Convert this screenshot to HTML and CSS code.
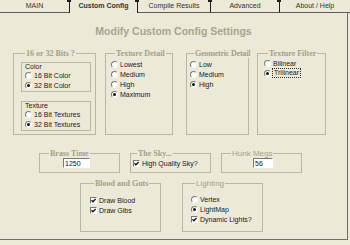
FILE: index.html
```html
<!DOCTYPE html>
<html lang="en">
<head>
  <meta charset="UTF-8">
  <title>Custom Config</title>
  <link rel="stylesheet" href="styles.css">
</head>
<body>
  <!-- tab strip -->
  <div class="tabs">
    <div class="tab main">MAIN</div>
    <div class="tab active">Custom Config</div>
    <div class="tab compile">Compile Results</div>
    <div class="tab advanced">Advanced</div>
    <div class="tab last">About / Help</div>
  </div>

  <div class="panel">
    <h1 class="title">Modify Custom Config Settings</h1>

    <div class="row row-top">
      <fieldset class="group bits">
        <legend>16 or 32 Bits ?</legend>
        <div class="subgroup">
          <div class="caption">Color</div>
          <label class="opt"><span class="radio"></span>16 Bit Color</label>
          <label class="opt"><span class="radio on"></span>32 Bit Color</label>
        </div>
        <div class="subgroup">
          <div class="caption">Texture</div>
          <label class="opt"><span class="radio"></span>16 Bit Textures</label>
          <label class="opt"><span class="radio on"></span>32 Bit Textures</label>
        </div>
      </fieldset>

      <fieldset class="group tex">
        <legend>Texture Detail</legend>
        <label class="opt"><span class="radio"></span>Lowest</label>
        <label class="opt"><span class="radio"></span>Medium</label>
        <label class="opt"><span class="radio"></span>High</label>
        <label class="opt"><span class="radio on"></span>Maximum</label>
      </fieldset>

      <fieldset class="group geo">
        <legend>Geometric Detail</legend>
        <label class="opt"><span class="radio"></span>Low</label>
        <label class="opt"><span class="radio"></span>Medium</label>
        <label class="opt"><span class="radio on"></span>High</label>
      </fieldset>

      <fieldset class="group filter">
        <legend>Texture Filter</legend>
        <label class="opt"><span class="radio"></span>Bilinear</label>
        <label class="opt"><span class="radio on"></span><span class="focus">Trilinear</span></label>
      </fieldset>
    </div>

    <div class="row row-mid">
      <fieldset class="group brass">
        <legend>Brass Time</legend>
        <input class="field" type="text" value="1250">
      </fieldset>

      <fieldset class="group sky">
        <legend>The Sky...</legend>
        <label class="opt"><span class="check"><svg viewBox="0 0 5 5"><path d="M0.4 2.3 L1.9 3.8 L4.6 0.9"/></svg></span>High Quality Sky?</label>
      </fieldset>

      <fieldset class="group hunk">
        <legend class="sans">Hunk Megs</legend>
        <input class="field small" type="text" value="56">
      </fieldset>
    </div>

    <div class="row row-bottom">
      <fieldset class="group blood">
        <legend>Blood and Guts</legend>
        <label class="opt"><span class="check"><svg viewBox="0 0 5 5"><path d="M0.4 2.3 L1.9 3.8 L4.6 0.9"/></svg></span>Draw Blood</label>
        <label class="opt"><span class="check"><svg viewBox="0 0 5 5"><path d="M0.4 2.3 L1.9 3.8 L4.6 0.9"/></svg></span>Draw Gibs</label>
      </fieldset>

      <fieldset class="group lighting">
        <legend class="sans">Lighting</legend>
        <label class="opt"><span class="radio"></span>Vertex</label>
        <label class="opt"><span class="radio on"></span>LightMap</label>
        <label class="opt"><span class="check"><svg viewBox="0 0 5 5"><path d="M0.4 2.3 L1.9 3.8 L4.6 0.9"/></svg></span>Dynamic Lights?</label>
      </fieldset>
    </div>
  </div>
</body>
</html>
```

FILE: styles.css
```css
* {
  box-sizing: border-box;
}

body {
  margin: 0;
  width: 350px;
  height: 245px;
  overflow: hidden;
  background: #ece9d8;
  font-family: "Liberation Sans", Arial, sans-serif;
  font-size: 7px;
  color: #1a1a1a;
}

/* tabs */
.tabs {
  display: flex;
  height: 13px;
}
.tab {
  position: relative;
  width: 70px;
  height: 13px;
  line-height: 11px;
  text-align: center;
  color: #333;
  border-right: 1px solid #1e1e1e;
  border-bottom: 1px solid #5d5c54;
}
.tab::after {
  content: "";
  position: absolute;
  top: 0;
  right: -2px;
  width: 4px;
  height: 2px;
  background: #1e1e1e;
}
.tab.active {
  width: 68px;
  line-height: 12px;
  font-weight: bold;
  color: #1f3a3a;
  border-bottom: none;
}
.tab.compile {
  width: 73px;
}
.tab.advanced {
  width: 69px;
}
.tab.last {
  border-right: none;
}
.tab.last::after {
  display: none;
}

/* panel */
.panel {
  width: 348px;
  height: 227px;
  padding-top: 12px;
  border-right: 1px solid #716f64;
  border-bottom: 1px solid #716f64;
}
.title {
  margin: 0;
  font-size: 10.5px;
  line-height: 12px;
  text-align: center;
  color: #a7a58f;
}

.row {
  display: flex;
  align-items: flex-start;
}
.row-top {
  margin-top: 12px;
  padding-left: 13px;
}
.row-mid {
  margin-top: 14px;
  padding-left: 39px;
  gap: 10px;
}
.row-bottom {
  margin-top: 6px;
  padding-left: 80px;
  gap: 21px;
}

/* group boxes */
.group {
  margin: 0;
  min-width: 0;
  padding: 1px 0 0 5px;
  border: 1px solid #bab7a7;
}
.group legend {
  margin-left: 4px;
  padding: 0 1px;
  white-space: nowrap;
  font: bold 8px/9px "Liberation Serif", "Times New Roman", serif;
  color: #a3a187;
}
.group legend.sans {
  font: 8px/9px "Liberation Sans", Arial, sans-serif;
}

.row-top .group {
  height: 86px;
}
.bits {
  width: 83px;
  padding-left: 7px;
}
.tex {
  width: 68px;
  margin-left: 9px;
}
.geo {
  width: 63px;
  margin-left: 13px;
  padding-left: 3px;
}
.geo legend {
  letter-spacing: -0.2px;
}
.filter {
  width: 69px;
  margin-left: 8px;
  padding-top: 0;
  padding-left: 6px;
}

.row-mid .group {
  width: 81px;
  height: 24px;
  padding-top: 0;
}
.sky {
  padding-left: 2px;
}
.row-bottom .group {
  width: 81px;
  height: 53px;
}
.blood {
  padding: 7px 0 0 9px;
}
.lighting {
  width: 80px;
  padding: 6px 0 0 8px;
}

.subgroup {
  width: 70px;
  margin-top: 3px;
  padding: 0 0 1px 3px;
  border: 1px solid #bab7a7;
}
.subgroup + .subgroup {
  margin-top: 9px;
}
.caption {
  line-height: 7px;
}

/* options */
.opt {
  display: flex;
  align-items: center;
  gap: 2px;
  height: 10px;
  white-space: nowrap;
}
.radio {
  flex: none;
  display: flex;
  align-items: center;
  justify-content: center;
  width: 7px;
  height: 7px;
  border-radius: 50%;
  background: #fff;
  border: 1px solid;
  border-color: #7a7a72 #f6f5ef #f6f5ef #7a7a72;
}
.radio.on::after {
  content: "";
  width: 3px;
  height: 3px;
  border-radius: 50%;
  background: #111;
}
.check {
  flex: none;
  display: flex;
  align-items: center;
  justify-content: center;
  width: 7px;
  height: 7px;
  background: #fff;
  border: 1px solid;
  border-color: #7a7a72 #fff #fff #7a7a72;
}
.check svg {
  width: 5px;
  height: 5px;
}
.check path {
  fill: none;
  stroke: #111;
  stroke-width: 1.3;
}
.focus {
  line-height: 8px;
  padding: 0 1px;
  outline: 1px dotted #333;
}

/* text inputs */
.field {
  display: block;
  width: 27px;
  height: 10px;
  margin-left: 18px;
  padding: 0 1px;
  border: 1px solid;
  border-color: #7a7a72 #fff #fff #7a7a72;
  background: #fff;
  font: 7px/8px "Liberation Sans", Arial, sans-serif;
  color: #111;
}
.field.small {
  width: 20px;
  margin-left: 26px;
}
```
